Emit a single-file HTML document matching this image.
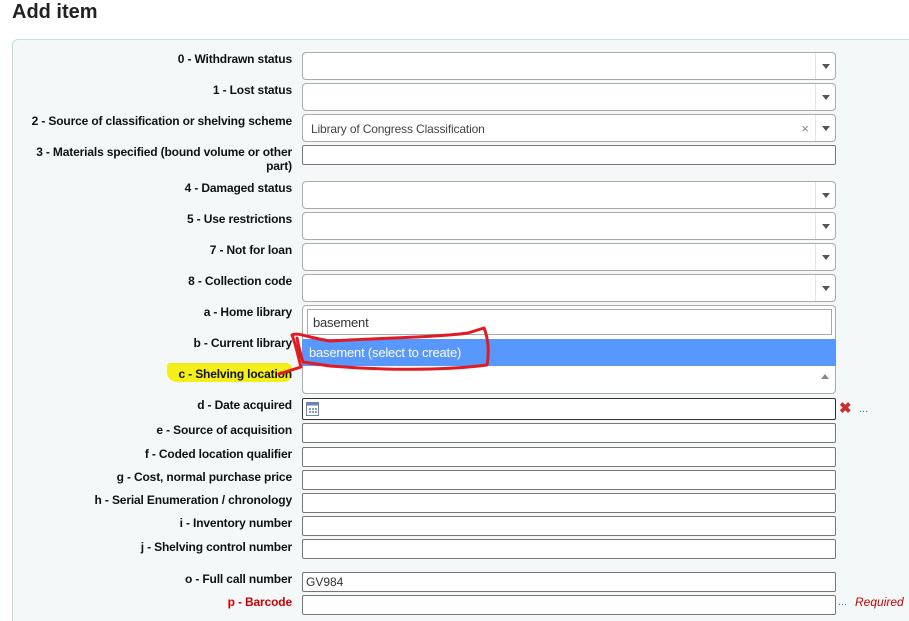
<!DOCTYPE html>
<html style="width:909px;height:621px;overflow:hidden"><head><meta charset="utf-8"><style>
*{box-sizing:border-box;margin:0;padding:0}
body{width:909px;height:621px;overflow:hidden;background:#fff;font-family:"Liberation Sans",Arial,sans-serif;position:relative}
h1{position:absolute;left:12px;top:0px;font-size:20px;font-weight:bold;color:#222;line-height:24px}
.panel{position:absolute;left:12px;top:39px;width:897px;height:582px;background:#f4f8f9;border:1px solid #c7dcde;border-right:none;border-bottom:none;border-radius:6px 0 0 0}
.lab{position:absolute;right:617px;width:280px;text-align:right;font-size:12px;font-weight:bold;color:#111;line-height:14px;letter-spacing:-0.15px}
.sel{position:absolute;left:302px;width:534px;height:28px;background:#fff;border:1px solid #aaa;border-radius:4px}
.sel .arr{position:absolute;right:0;top:0;bottom:0;width:20px;border-left:1px solid #e4e4e4}
.sel .arr:after{content:"";position:absolute;left:6px;top:11px;border-left:4px solid transparent;border-right:4px solid transparent;border-top:5px solid #555}
.inp{position:absolute;left:302px;width:534px;height:20px;background:#fff;border:1px solid #777;border-radius:2px}
</style></head><body>
<h1>Add item</h1>
<div class="panel"></div>
<div style="position:absolute;left:167px;top:363px;width:125px;height:19px;background:#f4ef18;border-radius:3px 6px 8px 10px"></div>

<div class="lab" style="top:52px">0 - Withdrawn status</div>
<div class="sel" style="top:52px"><div class="arr"></div></div>
<div class="lab" style="top:83px">1 - Lost status</div>
<div class="sel" style="top:83px"><div class="arr"></div></div>
<div class="lab" style="top:114px">2 - Source of classification or shelving scheme</div>
<div class="sel" style="top:114px"><span style="position:absolute;left:8px;top:7px;font-size:12px;color:#444;letter-spacing:-0.15px">Library of Congress Classification</span><span style="position:absolute;right:26px;top:6px;font-size:13px;color:#888">×</span><div class="arr"></div></div>
<div class="lab" style="top:145px">3 - Materials specified (bound volume or other<br>part)</div>
<div class="inp" style="top:145px"></div>
<div class="lab" style="top:181px">4 - Damaged status</div>
<div class="sel" style="top:181px"><div class="arr"></div></div>
<div class="lab" style="top:212px">5 - Use restrictions</div>
<div class="sel" style="top:212px"><div class="arr"></div></div>
<div class="lab" style="top:243px">7 - Not for loan</div>
<div class="sel" style="top:243px"><div class="arr"></div></div>
<div class="lab" style="top:274px">8 - Collection code</div>
<div class="sel" style="top:274px"><div class="arr"></div></div>
<div class="lab" style="top:305px">a - Home library</div>
<div class="lab" style="top:336px">b - Current library</div>
<div class="lab" style="top:367px">c - Shelving location</div>

<div style="position:absolute;left:302px;top:366px;width:534px;height:28px;background:#fff;border:1px solid #aaa;border-top:none;border-radius:0 0 4px 4px"><span style="position:absolute;right:6px;top:8px;border-left:4px solid transparent;border-right:4px solid transparent;border-bottom:5px solid #888"></span></div>
<div style="position:absolute;left:302px;top:305px;width:534px;height:62px;background:#fff;border:1px solid #aaa;border-bottom:none;border-radius:4px 4px 0 0"></div>
<div style="position:absolute;left:307px;top:309px;width:525px;height:26px;border:1px solid #aaa;background:#fff;font-size:13px;color:#333;padding:5px 5px;letter-spacing:-0.2px">basement</div>
<div style="position:absolute;left:302px;top:339px;width:534px;height:27px;background:#5897fb;color:#fff;font-size:13px;padding:6px 7px;letter-spacing:-0.2px">basement (select to create)</div>

<div class="lab" style="top:398px">d - Date acquired</div>
<div class="inp" style="top:398px;height:22px;border-color:#333"><svg style="position:absolute;left:3px;top:3px" width="13" height="14" viewBox="0 0 13 14"><rect x=".5" y=".5" width="12" height="13" fill="#fff" stroke="#6a86ad"/><rect x=".5" y=".5" width="12" height="3" fill="#6a86ad"/><g fill="#8aa0c0"><rect x="3" y="6" width="2" height="2"/><rect x="6" y="6" width="2" height="2"/><rect x="9" y="6" width="2" height="2"/><rect x="3" y="9" width="2" height="2"/><rect x="6" y="9" width="2" height="2"/><rect x="9" y="9" width="2" height="2"/></g></svg></div>
<div style="position:absolute;left:839px;top:399px;font-size:15px;font-weight:bold;color:#c9302c">✖</div>
<div style="position:absolute;left:859px;top:403px;font-size:11px;color:#38c">...</div>
<div class="lab" style="top:423px">e - Source of acquisition</div>
<div class="inp" style="top:423px"></div>
<div class="lab" style="top:447px">f - Coded location qualifier</div>
<div class="inp" style="top:447px"></div>
<div class="lab" style="top:470px">g - Cost, normal purchase price</div>
<div class="inp" style="top:470px"></div>
<div class="lab" style="top:493px">h - Serial Enumeration / chronology</div>
<div class="inp" style="top:493px"></div>
<div class="lab" style="top:516px">i - Inventory number</div>
<div class="inp" style="top:516px"></div>
<div class="lab" style="top:540px">j - Shelving control number</div>
<div class="inp" style="top:539px"></div>
<div class="lab" style="top:572px">o - Full call number</div>
<div class="inp" style="top:572px;font-size:12px;color:#333;padding:2px 3px">GV984</div>
<div class="lab" style="top:595px;color:#c00">p - Barcode</div>
<div class="inp" style="top:595px"></div>
<div style="position:absolute;left:838px;top:596px;font-size:11px;color:#38c">...</div>
<div style="position:absolute;left:855px;top:595px;font-size:12px;font-style:italic;color:#c00">Required</div>

<svg style="position:absolute;left:0;top:0" width="909" height="621"><path d="M279 374 L301 367 C298 356 296 345 292 335 C298 332 305 337 330 341 C380 338 440 337 468 333 L484 328 C489 340 489 355 487 365 C440 371 380 370 330 366 L303 362 C300 352 298 344 297 338" fill="none" stroke="#e11b22" stroke-width="3" stroke-linejoin="round" stroke-linecap="round"/></svg>
</body></html>
